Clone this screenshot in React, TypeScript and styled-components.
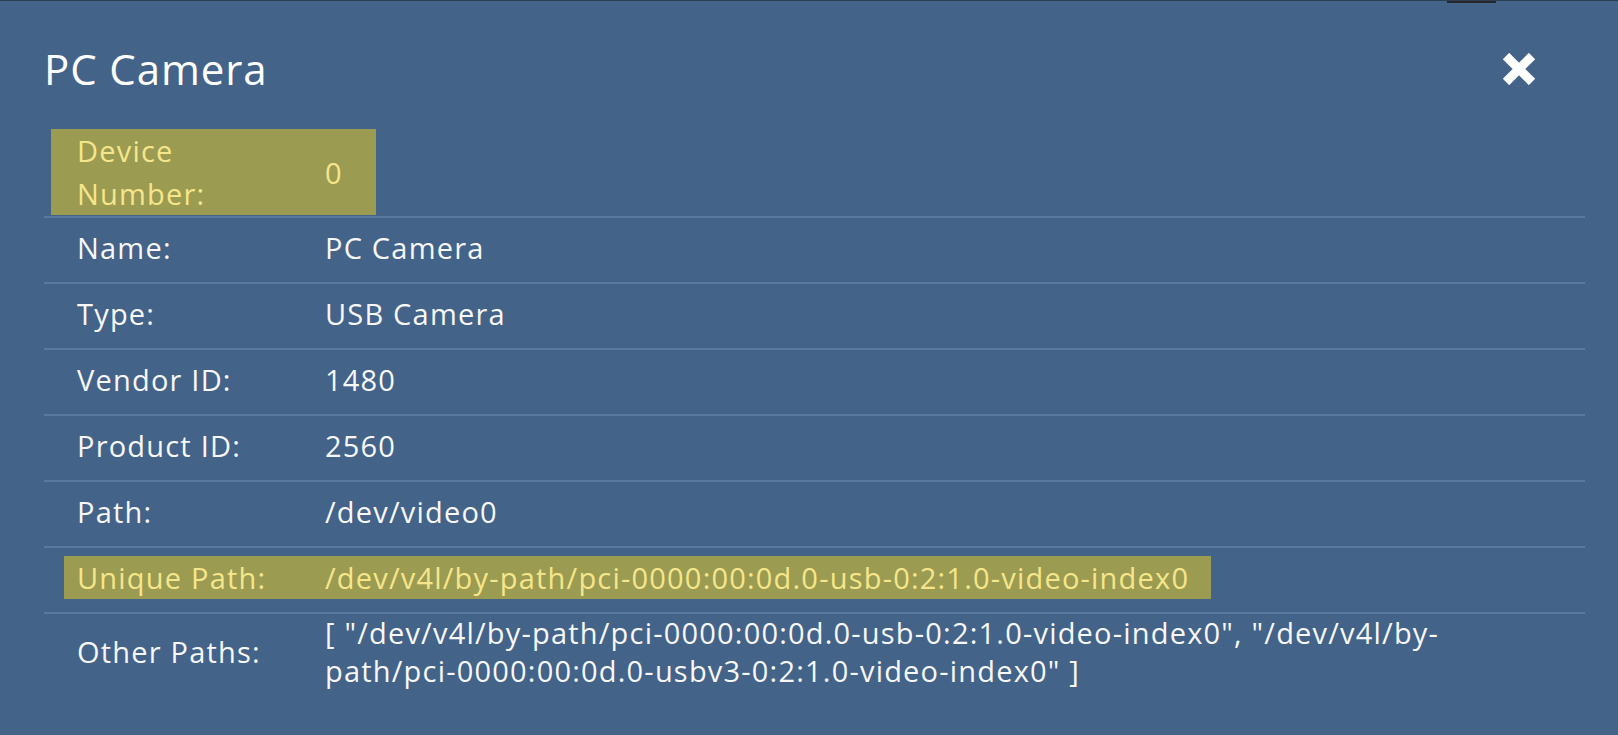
import styled, { createGlobalStyle } from 'styled-components';

const GlobalStyle = createGlobalStyle`
    html, body {
        margin: 0;
        padding: 0;
        background: #436389;
    }
    body {
        font-family: "Open Sans", "Noto Sans", sans-serif;
        color: #f7f7f7;
    }
`;

const Page = styled.div`
    position: relative;
    min-height: 735px;
    box-sizing: border-box;
    border-top: 1px solid #2e3e52;
    padding: 43px 33px 0 44px;
`;

const TopNotch = styled.div`
    position: absolute;
    top: 0;
    left: 1447px;
    width: 49px;
    height: 2px;
    background: #262626;
`;

const Header = styled.div`
    display: flex;
    justify-content: space-between;
    align-items: center;
    padding-right: 49px;
`;

const Title = styled.h1`
    margin: 0;
    font-size: 42px;
    line-height: 50px;
    font-weight: 400;
    letter-spacing: 0.9px;
    color: #ffffff;
`;

const CloseButton = styled.button`
    display: flex;
    padding: 0;
    border: none;
    background: none;
    cursor: pointer;
`;

const DeviceBlock = styled.div`
    display: grid;
    grid-template-columns: 274px auto;
    width: 325px;
    margin: 35px 0 1px 7px;
    background: #9b9b52;
    color: #f6e68b;
    font-size: 29px;
    line-height: 43px;
    letter-spacing: 1.2px;
`;

const DeviceLabel = styled.div`
    padding: 0 60px 0 26px;
`;

const DeviceValue = styled.div`
    display: flex;
    align-items: center;
`;

const Table = styled.div`
    display: flex;
    flex-direction: column;
`;

const Row = styled.div<{ $tall?: boolean }>`
    display: flex;
    align-items: center;
    border-top: 2px solid #587aa1;
    min-height: ${(p) => (p.$tall ? '76px' : '64px')};
`;

const Pair = styled.div<{ $highlight?: boolean; $tall?: boolean }>`
    display: flex;
    align-items: center;
    margin-left: ${(p) => (p.$highlight ? '20px' : '0')};
    margin-top: ${(p) => (p.$tall ? '0' : p.$highlight ? '-6px' : '-4px')};
    padding-right: ${(p) => (p.$highlight ? '22px' : '0')};
    background: ${(p) => (p.$highlight ? '#9b9b52' : 'transparent')};
    color: ${(p) => (p.$highlight ? '#f6e68b' : '#f7f7f7')};
    font-size: 29px;
    letter-spacing: 1.2px;
    line-height: ${(p) => (p.$highlight ? '43px' : '38px')};
`;

const Label = styled.div<{ $highlight?: boolean }>`
    flex: 0 0 auto;
    box-sizing: border-box;
    width: ${(p) => (p.$highlight ? '261px' : '281px')};
    padding-left: ${(p) => (p.$highlight ? '13px' : '33px')};
`;

const Value = styled.div`
    max-width: 1170px;
`;

const CloseIcon = () => (
    <svg width="34" height="32" viewBox="0 0 34 32">
        <path d="M4 3 L30 29 M30 3 L4 29" stroke="#ffffff" strokeWidth="9" strokeLinecap="butt" />
    </svg>
);

interface Field {
    label: string;
    value: string;
    highlight?: boolean;
}

const fields: Field[] = [
    { label: 'Name:', value: 'PC Camera' },
    { label: 'Type:', value: 'USB Camera' },
    { label: 'Vendor ID:', value: '1480' },
    { label: 'Product ID:', value: '2560' },
    { label: 'Path:', value: '/dev/video0' },
    {
        label: 'Unique Path:',
        value: '/dev/v4l/by-path/pci-0000:00:0d.0-usb-0:2:1.0-video-index0',
        highlight: true,
    },
];

const otherPaths =
    '[ "/dev/v4l/by-path/pci-0000:00:0d.0-usb-0:2:1.0-video-index0", "/dev/v4l/by-path/pci-0000:00:0d.0-usbv3-0:2:1.0-video-index0" ]';

const App = () => {
    return (
        <>
            <GlobalStyle />
            <Page>
                <TopNotch />
                <Header>
                    <Title>PC Camera</Title>
                    <CloseButton aria-label="Close">
                        <CloseIcon />
                    </CloseButton>
                </Header>
                <DeviceBlock>
                    <DeviceLabel>Device Number:</DeviceLabel>
                    <DeviceValue>0</DeviceValue>
                </DeviceBlock>
                <Table>
                    {fields.map((f) => (
                        <Row key={f.label}>
                            <Pair $highlight={f.highlight}>
                                <Label $highlight={f.highlight}>{f.label}</Label>
                                <Value>{f.value}</Value>
                            </Pair>
                        </Row>
                    ))}
                    <Row $tall>
                        <Pair $tall>
                            <Label>Other Paths:</Label>
                            <Value>{otherPaths}</Value>
                        </Pair>
                    </Row>
                </Table>
            </Page>
        </>
    );
};

export default App;
